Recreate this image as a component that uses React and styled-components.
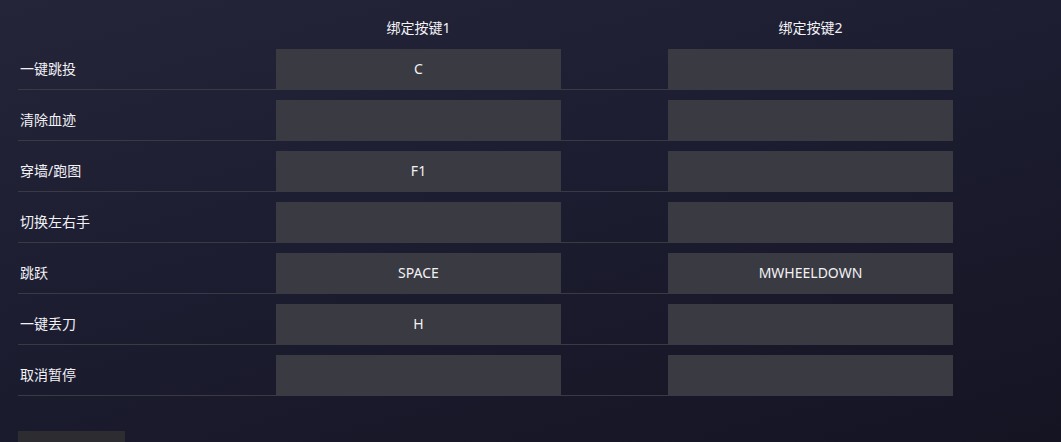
import React from 'react'
import styled, { createGlobalStyle } from 'styled-components'

const GlobalStyle = createGlobalStyle`
  html, body {
    margin: 0;
    padding: 0;
    height: 100%;
  }
  body {
    background: linear-gradient(165deg, #25253a 0%, #1d1d31 45%, #141423 100%);
    font-family: "Noto Sans", "Noto Sans CJK SC", sans-serif;
    overflow: hidden;
  }
`

const bindings = [
    { name: '一键跳投', keys: ['C', ''] },
    { name: '清除血迹', keys: ['', ''] },
    { name: '穿墙/跑图', keys: ['F1', ''] },
    { name: '切换左右手', keys: ['', ''] },
    { name: '跳跃', keys: ['SPACE', 'MWHEELDOWN'] },
    { name: '一键丢刀', keys: ['H', ''] },
    { name: '取消暂停', keys: ['', ''] },
]

const App = () => {
    return (
        <>
            <GlobalStyle />
            <Page>
                <Table>
                    <HeadRow>
                        <HeadCell />
                        <HeadCell>绑定按键1</HeadCell>
                        <span />
                        <HeadCell>绑定按键2</HeadCell>
                    </HeadRow>
                    {bindings.map((b) => (
                        <Row key={b.name}>
                            <Label>{b.name}</Label>
                            <KeyBox>{b.keys[0]}</KeyBox>
                            <span />
                            <KeyBox>{b.keys[1]}</KeyBox>
                        </Row>
                    ))}
                </Table>
                <ResetButton />
            </Page>
        </>
    )
}

export default App

const Page = styled.div`
    padding: 0 18px;
    height: 442px;
    box-sizing: border-box;
    overflow: hidden;
`

const Table = styled.div`
    width: 935px;
    display: flex;
    flex-direction: column;
`

const HeadRow = styled.div`
    display: grid;
    grid-template-columns: 258px 285px 107px 285px;
    height: 39px;
    padding-top: 19px;
    box-sizing: border-box;
`

const HeadCell = styled.div`
    font-size: 14px;
    line-height: 18px;
    color: #f2f2f5;
    text-align: center;
`

const Row = styled.div`
    display: grid;
    grid-template-columns: 258px 285px 107px 285px;
    margin-top: 10px;
    border-bottom: 1px solid #3a3a44;
`

const Label = styled.div`
    font-size: 14px;
    color: #f2f2f5;
    display: flex;
    align-items: center;
    padding: 0 0 2px 2px;
`

const KeyBox = styled.div`
    height: 40px;
    padding-bottom: 2px;
    box-sizing: border-box;
    background: #3a3a42;
    color: #f2f2f5;
    font-size: 14px;
    display: flex;
    align-items: center;
    justify-content: center;
`

const ResetButton = styled.div`
    margin-top: 35px;
    width: 107px;
    height: 36px;
    background: #2c2c31;
`
